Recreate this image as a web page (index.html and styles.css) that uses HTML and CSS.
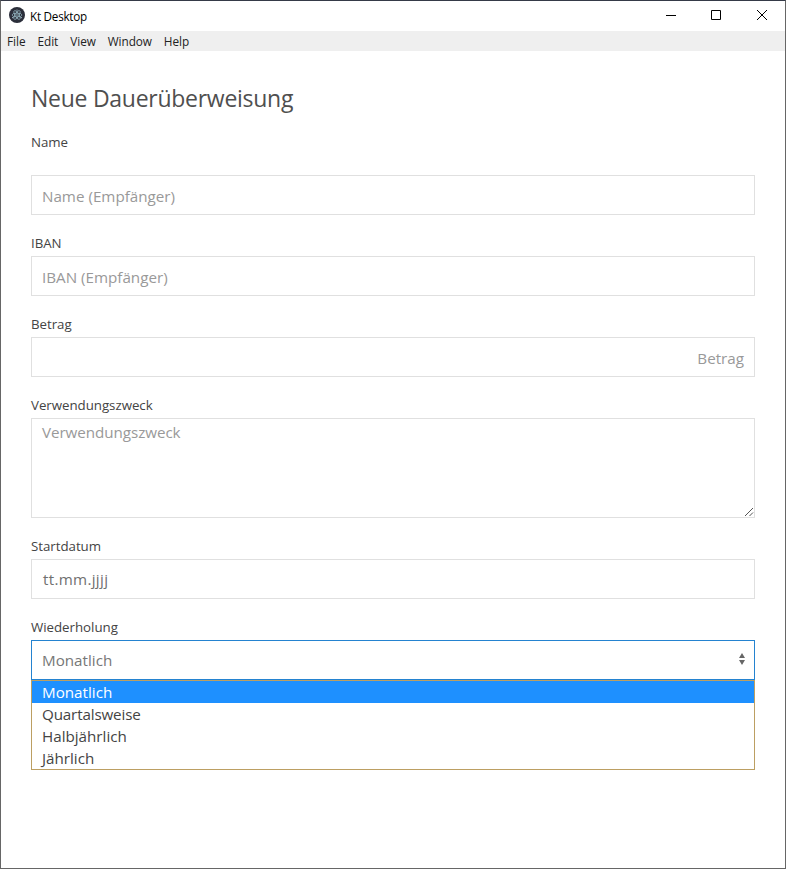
FILE: index.html
```html
<!DOCTYPE html>
<html lang="de">
<head>
<meta charset="utf-8">
<title>Kt Desktop</title>
<link rel="stylesheet" href="styles.css">
</head>
<body>
<div class="window">
  <header class="titlebar">
    <svg class="app-icon" width="16" height="16" viewBox="0 0 16 16">
      <circle cx="8" cy="8" r="8" fill="#2b2e3a"/>
      <g fill="none" stroke="#9fc3cf" stroke-width=".65">
        <ellipse cx="8" cy="8" rx="5" ry="1.9"/>
        <ellipse cx="8" cy="8" rx="5" ry="1.9" transform="rotate(60 8 8)"/>
        <ellipse cx="8" cy="8" rx="5" ry="1.9" transform="rotate(120 8 8)"/>
      </g>
      <g fill="#b5d5de"><circle cx="8" cy="8" r=".7"/><circle cx="3.8" cy="10.6" r=".7"/><circle cx="12.2" cy="10.6" r=".7"/><circle cx="8" cy="3" r=".6"/></g>
    </svg>
    <span class="app-name">Kt Desktop</span>
    <div class="controls">
      <svg width="46" height="29" viewBox="0 0 46 29"><path d="M18 14.5h10" stroke="#000"/></svg>
      <svg width="45" height="29" viewBox="0 0 45 29"><path d="M17.5 9.5h9v9h-9z" fill="none" stroke="#000"/></svg>
      <svg width="46" height="29" viewBox="0 0 46 29"><path d="M18 9l10 10M28 9L18 19" stroke="#000"/></svg>
    </div>
  </header>
  <nav class="menubar">
    <span>File</span><span>Edit</span><span>View</span><span class="wide">Window</span><span>Help</span>
  </nav>
  <main class="form">
    <h1>Neue Dauerüberweisung</h1>
    <div class="field first"><div class="label">Name</div><div class="box low"><span>Name (Empfänger)</span></div></div>
    <div class="field"><div class="label">IBAN</div><div class="box low"><span>IBAN (Empfänger)</span></div></div>
    <div class="field"><div class="label">Betrag</div><div class="box low end"><span>Betrag</span></div></div>
    <div class="field"><div class="label">Verwendungszweck</div><div class="box area"><span>Verwendungszweck</span>
      <svg class="grip" width="10" height="10" viewBox="0 0 10 10"><path d="M1 9L9 1M5.500 9L9 5.500" stroke="#555" stroke-width="1"/></svg></div></div>
    <div class="field"><div class="label">Startdatum</div><div class="box"><span class="date">tt.mm.jjjj</span></div></div>
    <div class="field"><div class="label">Wiederholung</div>
      <div class="box select"><span>Monatlich</span>
        <svg class="arrows" width="8" height="12" viewBox="0 0 8 12"><path d="M1 5L4 0l3 5zM1 7h6l-3 5z" fill="#666"/></svg></div>
      <div class="options">
        <div class="option selected">Monatlich</div>
        <div class="option quarterly">Quartalsweise</div>
        <div class="option">Halbjährlich</div>
        <div class="option">Jährlich</div>
      </div>
    </div>
  </main>
</div>
</body>
</html>
```

FILE: styles.css
```css
* { box-sizing: border-box; }
body { margin: 0; background: #fff; font-family: "Open Sans", "Noto Sans", sans-serif; }
.window { width: 786px; height: 869px; border: 1px solid #666; border-top-color: #353a48; background: #fff; overflow: hidden; }
.titlebar { height: 30px; display: flex; align-items: center; padding-left: 8px; }
.app-icon { margin-top: -2px; }
.app-name { margin-left: 5px; font-size: 11.7px; letter-spacing: -.25px; color: #000; line-height: 20px; }
.controls { margin-left: auto; display: flex; height: 30px; }
.menubar { height: 20px; background: #efefef; display: flex; gap: 12px; padding-left: 6px; font-size: 11.8px; letter-spacing: -.05px; line-height: 20px; color: #222; }
.wide { letter-spacing: -.1px; }
.form { padding: 31px 30px 0; }
h1 { margin: 0; font-size: 23px; font-weight: 400; letter-spacing: -.27px; line-height: 32px; color: #4f4f4f; height: 34px; }
.field { padding-top: 18px; }
.field.first { padding-top: 16px; }
.label { height: 23px; font-size: 13.3px; letter-spacing: -.03px; line-height: 21px; color: #444; }
.first .label { height: 43px; }
.box { height: 40px; border: 1px solid #e0e0e0; padding: 0 10px; display: flex; align-items: center; font-size: 15.2px; line-height: 22px; color: #999; }
.low { padding-top: 1px; }
.end { justify-content: flex-end; }
.area { height: 100px; align-items: flex-start; padding-top: 2px; letter-spacing: -.06px; position: relative; }
.grip { position: absolute; right: 0; bottom: 0; }
.date { color: #707070; margin-left: 1px; letter-spacing: .3px; }
.select { border-color: #2483d0; justify-content: space-between; color: #777; padding-right: 8px; }
.arrows { margin-top: -2px; }
.options { height: 90px; border: 1px solid #bc9f62; }
.option { height: 22px; padding-left: 10px; font-size: 15.2px; line-height: 22px; color: #444; }
.quarterly { letter-spacing: -.15px; }
.selected { background: #1e90ff; color: #fff; }
```
